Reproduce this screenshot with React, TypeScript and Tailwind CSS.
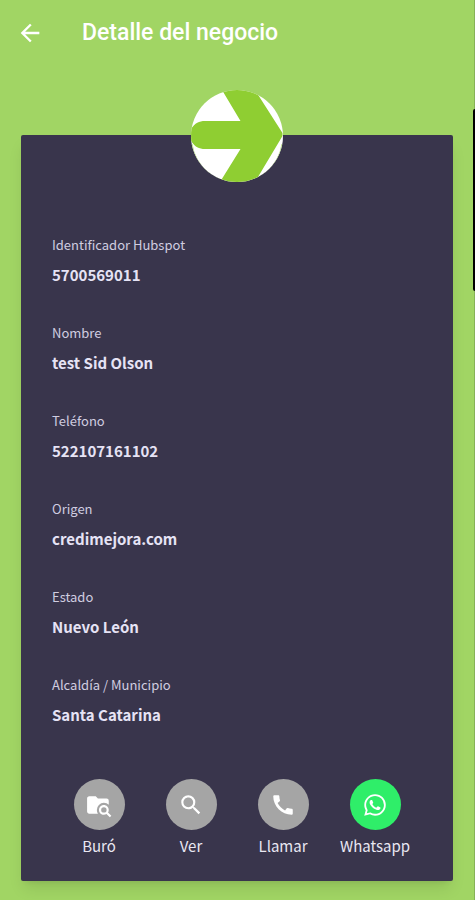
import type { ReactNode } from "react";
import { MdArrowBack, MdCall, MdSearch, MdWhatsapp } from "react-icons/md";

const fields = [
  { label: "Identificador Hubspot", value: "5700569011" },
  { label: "Nombre", value: "test Sid Olson" },
  { label: "Teléfono", value: "522107161102" },
  { label: "Origen", value: "credimejora.com" },
  { label: "Estado", value: "Nuevo León" },
  { label: "Alcaldía / Municipio", value: "Santa Catarina" },
];

type ActionButtonProps = {
  label: string;
  color?: string;
  children: ReactNode;
};

function ActionButton({
  label,
  color = "bg-[#a5a5a5]",
  children,
}: ActionButtonProps) {
  return (
    <button
      type="button"
      className="flex cursor-pointer flex-col items-center gap-1 text-[15px] leading-6 text-[#e9e7f2]"
    >
      <span
        className={`flex size-[51px] items-center justify-center rounded-full text-white ${color}`}
      >
        {children}
      </span>
      {label}
    </button>
  );
}

function FolderSearchIcon() {
  return (
    <svg viewBox="0 0 24 24" className="size-6.5" fill="currentColor">
      <path d="M16.5,12C19,12 21,14 21,16.5C21,17.38 20.75,18.21 20.31,18.9L23.39,22L22,23.39L18.88,20.32C18.19,20.75 17.37,21 16.5,21C14,21 12,19 12,16.5C12,14 14,12 16.5,12M16.5,14A2.5,2.5 0 0,0 14,16.5A2.5,2.5 0 0,0 16.5,19A2.5,2.5 0 0,0 19,16.5A2.5,2.5 0 0,0 16.5,14M9,4L11,6H19A2,2 0 0,1 21,8V11.81C19.83,10.69 18.25,10 16.5,10A6.5,6.5 0 0,0 10,16.5C10,17.79 10.37,19 11,20H3C1.89,20 1,19.1 1,18V6C1,4.89 1.89,4 3,4H9Z" />
    </svg>
  );
}

function Logo() {
  return (
    <svg viewBox="0 0 92 92" className="-mt-[45px] size-[92px]">
      <defs>
        <clipPath id="logo-circle">
          <circle cx="46" cy="46" r="46" />
        </clipPath>
      </defs>
      <g clipPath="url(#logo-circle)">
        <rect width="92" height="92" fill="#ffffff" />
        <path
          fill="#8fce32"
          d="M31 0H64L91.500 43V46L64 92H29L49.500 59H14C8 59 4 57 0 51V39C4 33 8 31 14 31H49.500Z"
        />
        <path
          d="M1 54A45.500 45.500 0 0 0 91 54"
          fill="none"
          stroke="#b9dd86"
        />
      </g>
    </svg>
  );
}

export default function App() {
  return (
    <main className="relative min-h-screen bg-[#a1d564] pb-5 font-['Noto_Sans_CJK_JP','Noto_Sans',sans-serif]">
      <header className="flex h-[66px] items-center gap-[38px] px-4 text-white">
        <button type="button" aria-label="Volver" className="cursor-pointer">
          <MdArrowBack className="size-7" />
        </button>
        <h1 className="font-[Roboto,sans-serif] text-[23px] font-medium">
          Detalle del negocio
        </h1>
      </header>

      <section className="mt-[69px] mr-[22px] ml-[21px] flex flex-col items-center rounded-xs bg-[#39354c] pb-[23px] shadow-lg">
        <Logo />
        <dl className="mt-12 flex w-full flex-col gap-7 px-[31px]">
          {fields.map((field) => (
            <div key={field.label}>
              <dt className="text-[13px] leading-[30px] text-[#d0cde0]">
                {field.label}
              </dt>
              <dd className="text-[15px] leading-[30px] font-bold text-[#e6e3f5]">
                {field.value}
              </dd>
            </div>
          ))}
        </dl>
        <div className="mt-[49px] grid w-full grid-cols-4 px-8">
          <ActionButton label="Buró">
            <FolderSearchIcon />
          </ActionButton>
          <ActionButton label="Ver">
            <MdSearch className="size-6.5" />
          </ActionButton>
          <ActionButton label="Llamar">
            <MdCall className="size-6.5" />
          </ActionButton>
          <ActionButton label="Whatsapp" color="bg-[#2fee69]">
            <MdWhatsapp className="size-6.5" />
          </ActionButton>
        </div>
      </section>

      {/* right edge line and scroll thumb */}
      <span className="absolute inset-y-0 right-0 w-px bg-[#86b257]" />
      <span className="absolute top-[109px] right-0 h-[182px] w-[2px] rounded-l-xs bg-black" />
    </main>
  );
}
